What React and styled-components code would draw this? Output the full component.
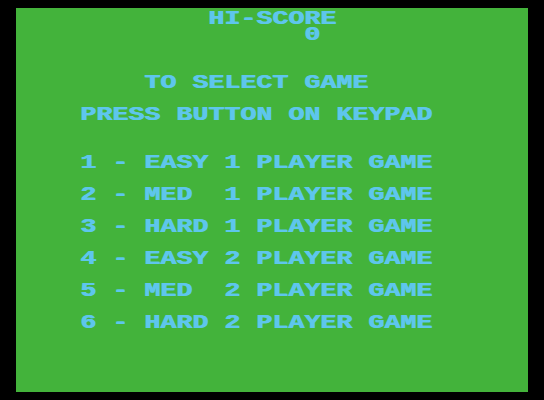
import React from "react";
import styled, { createGlobalStyle } from "styled-components";

const Global = createGlobalStyle`
  html, body {
    margin: 0;
    padding: 0;
    background: #000;
  }
  body {
    width: 544px;
    height: 400px;
    overflow: hidden;
  }
`;

const Frame = styled.div`
  width: 544px;
  height: 400px;
  padding: 8px 16px;
  box-sizing: border-box;
  background: #000;
`;

/* 32 x 24 character cells, each 16px square */
const Screen = styled.div`
  width: 512px;
  height: 384px;
  background: #43b33b;
  display: grid;
  grid-template-columns: repeat(32, 16px);
  grid-template-rows: repeat(24, 16px);
  overflow: hidden;
`;

const Line = styled.div`
  grid-row: ${(p) => p.$row + 1};
  grid-column: ${(p) => p.$col + 1} / -1;
  align-self: start;
  height: 16px;
  white-space: pre;
  font-family: "Liberation Mono", "DejaVu Sans Mono", monospace;
  font-weight: bold;
  font-size: 21px;
  line-height: 21px;
  color: #5ec6ec;
  /* chunky vertical strokes, like the console's character set */
  text-shadow: 0.8px 0 0 #5ec6ec;
  transform: scaleX(1.2698);
  transform-origin: left top;
`;

const lines = [
  { row: 0, col: 12, text: "HI-SCORE" },
  { row: 1, col: 18, text: "0" },
  { row: 4, col: 8, text: "TO SELECT GAME" },
  { row: 6, col: 4, text: "PRESS BUTTON ON KEYPAD" },
  { row: 9, col: 4, text: "1 - EASY 1 PLAYER GAME" },
  { row: 11, col: 4, text: "2 - MED  1 PLAYER GAME" },
  { row: 13, col: 4, text: "3 - HARD 1 PLAYER GAME" },
  { row: 15, col: 4, text: "4 - EASY 2 PLAYER GAME" },
  { row: 17, col: 4, text: "5 - MED  2 PLAYER GAME" },
  { row: 19, col: 4, text: "6 - HARD 2 PLAYER GAME" },
];

export default function App() {
  return (
    <>
      <Global />
      <Frame>
        <Screen>
          {lines.map((l) => (
            <Line key={l.row} $row={l.row} $col={l.col}>
              {l.text}
            </Line>
          ))}
        </Screen>
      </Frame>
    </>
  );
}
